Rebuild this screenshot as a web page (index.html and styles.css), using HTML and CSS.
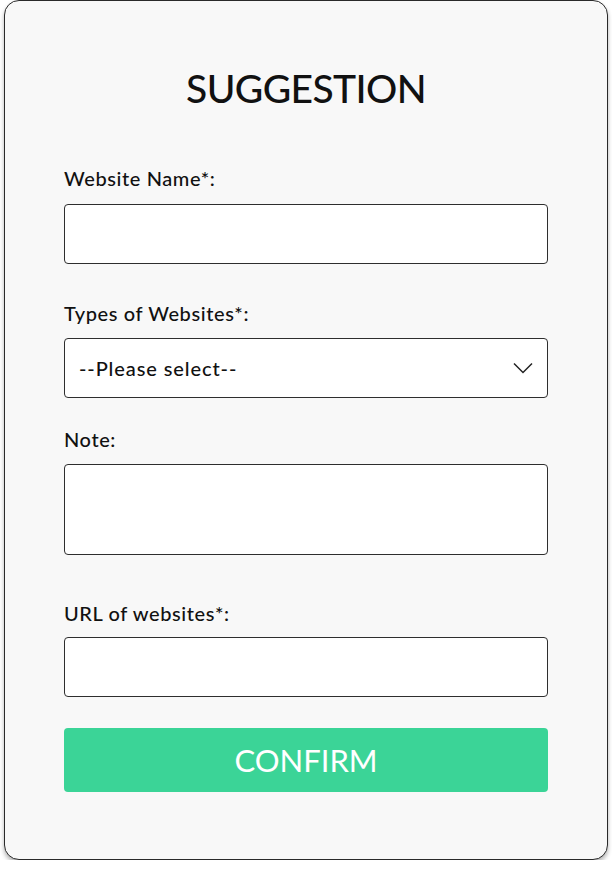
FILE: index.html
```html
<!DOCTYPE html>
<html lang="en">
<head>
<meta charset="utf-8">
<title>Suggestion</title>
<link rel="stylesheet" href="styles.css">
</head>
<body>
<form class="card">
  <h1 class="title">SUGGESTION</h1>
  <label class="label label-name" for="name">Website Name*:</label>
  <input class="field" id="name" type="text">
  <label class="label label-type" for="type">Types of Websites*:</label>
  <div class="select">
    <span class="select-text">--Please select--</span>
    <svg class="chevron" width="20" height="12" viewBox="0 0 20 12"><path d="M1 1.5 L10 10.5 L19 1.5" fill="none" stroke="#222" stroke-width="1.5"/></svg>
  </div>
  <label class="label label-note" for="note">Note:</label>
  <textarea class="field area" id="note"></textarea>
  <label class="label label-url" for="url">URL of websites*:</label>
  <input class="field" id="url" type="text">
  <button class="confirm" type="button">CONFIRM</button>
</form>
</body>
</html>
```
FILE: styles.css
```css
html, body {
  margin: 0;
  padding: 0;
  background: #ffffff;
}
body {
  font-family: Lato, "Open Sans", sans-serif;
  color: #111;
}
.card {
  box-sizing: border-box;
  width: 604px;
  height: 860px;
  margin: 0 0 0 4px;
  background: #f8f8f8;
  border: 1px solid #2a2a2a;
  border-radius: 15px;
  box-shadow: 0 3px 4px rgba(0,0,0,0.3);
  padding: 0 59px;
  display: flex;
  flex-direction: column;
}
.title {
  margin: 67px 0 0;
  font-size: 39px;
  line-height: 40px;
  font-weight: 500;
  text-align: center;
  letter-spacing: -0.6px;
}
.label {
  display: block;
  font-size: 20px;
  line-height: 24px;
  font-weight: 500;
  letter-spacing: 0.6px;
}
.label-name { margin-top: 58px; }
.label-type { margin-top: 37px; }
.label-note { margin-top: 29px; }
.label-url { margin-top: 46px; }
.field, .select {
  box-sizing: border-box;
  display: block;
  width: 484px;
  height: 60px;
  margin: 14px 0 0;
  background: #fff;
  border: 1px solid #2e2e2e;
  border-radius: 4px;
  font: inherit;
  padding: 0 14px;
  outline: none;
}
.label-type + .select { margin-top: 13px; }
.label-note + .area { margin-top: 13px; }
.label-url + .field { margin-top: 12px; }
.area {
  height: 91px;
  resize: none;
}
.select {
  display: flex;
  align-items: center;
  justify-content: space-between;
  padding: 0 14px 0 14px;
}
.select-text {
  font-size: 20px;
  font-weight: 500;
  letter-spacing: 0.9px;
}
.chevron {
  display: block;
}
.confirm {
  margin-top: 31px;
  width: 484px;
  height: 64px;
  background: #3bd497;
  color: #fff;
  border: none;
  border-radius: 4px;
  font-family: inherit;
  font-size: 31px;
  font-weight: 400;
  letter-spacing: 0;
}
```
